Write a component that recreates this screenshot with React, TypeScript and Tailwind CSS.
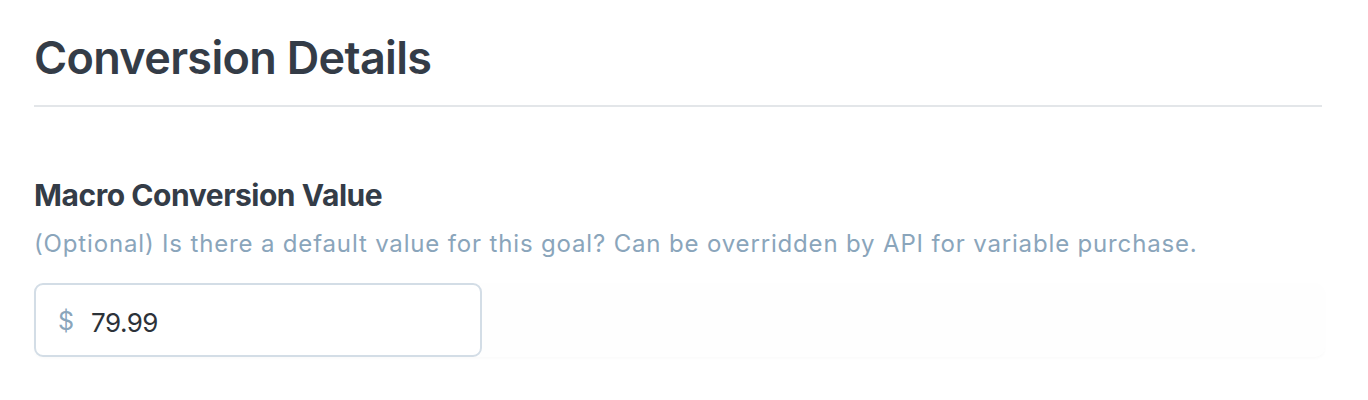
import React, { useState } from 'react';

const App = () => {
  const [value, setValue] = useState('79.99');

  return (
    <div className="min-h-[400px] w-[1368px] bg-white pl-[34px] pr-[46px] pt-[30px]" style={{ fontFamily: 'Inter, "Noto Sans", sans-serif' }}>
      <h1 className="text-[45px] font-semibold leading-[56px] tracking-[-0.015em] text-[#343c47]">Conversion Details</h1>
      <div className="mt-[19px] h-[2px] w-[1288px] bg-[#e3e6e9]" />

      <section className="mt-[70px]">
        <h2 className="text-[30px] font-bold leading-[36px] tracking-[-0.015em] text-[#343c47]">Macro Conversion Value</h2>
        <p className="mt-[16px] text-[24px] leading-[30px] tracking-[0.035em] text-[#8aa5bb]">
          (Optional) Is there a default value for this goal? Can be overridden by API for variable purchase.
        </p>

        <div className="mt-[24px] w-[1291px] rounded-[10px] bg-[#fefefe] shadow-[0_2px_3px_rgba(0,0,0,0.02)]">
          <label className="flex h-[74px] w-[448px] items-center rounded-[9px] border-2 border-[#d3dde6] bg-white px-[22px] pt-[4px]">
            <span className="text-[25px] text-[#8aa5bb]">$</span>
            <input
              className="ml-[17px] w-full bg-transparent text-[26px] tracking-[-0.02em] text-[#2c3239] outline-none"
              value={value}
              onChange={e => setValue(e.target.value)}
            />
          </label>
        </div>
      </section>
    </div>
  );
};

export default App;
